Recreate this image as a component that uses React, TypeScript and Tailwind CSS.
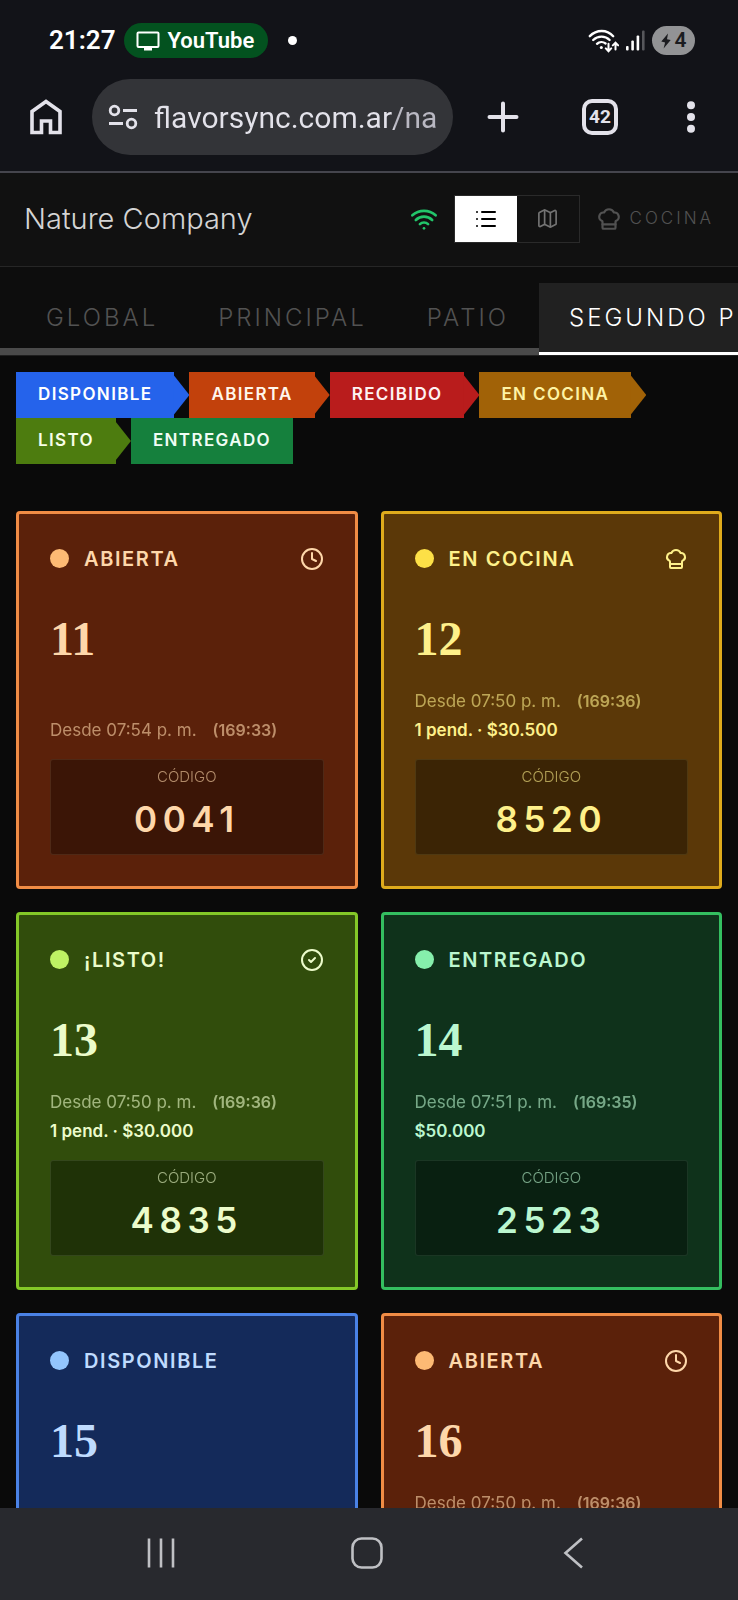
import { ChefHat, CircleCheck, Clock, List, Map, Wifi } from 'lucide-react'
import type { LucideIcon } from 'lucide-react'

type Status = 'disponible' | 'abierta' | 'cocina' | 'listo' | 'entregado'

interface TableInfo {
  number: string
  status: Status
  since?: string
  elapsed?: string
  summary?: string
  code?: string
}

const statusStyles: Record<Status, { label: string; card: string; dot: string; icon?: LucideIcon }> = {
  disponible: {
    label: 'DISPONIBLE',
    card: 'bg-[#142a5a] border-[#4a82e6] text-[#bfdbfe]',
    dot: 'bg-[#93c5fd]',
  },
  abierta: {
    label: 'ABIERTA',
    card: 'bg-[#5b210a] border-[#f08c45] text-[#fed7aa]',
    dot: 'bg-[#fdba74]',
    icon: Clock,
  },
  cocina: {
    label: 'EN COCINA',
    card: 'bg-[#5b3808] border-[#dfab1c] text-[#fef08a]',
    dot: 'bg-[#fde047]',
    icon: ChefHat,
  },
  listo: {
    label: '¡LISTO!',
    card: 'bg-[#314d0c] border-[#84c828] text-[#ecfccb]',
    dot: 'bg-[#bef264]',
    icon: CircleCheck,
  },
  entregado: {
    label: 'ENTREGADO',
    card: 'bg-[#0f321b] border-[#34be60] text-[#bbf7d0]',
    dot: 'bg-[#86efac]',
  },
}

const tables: TableInfo[] = [
  { number: '11', status: 'abierta', since: '07:54 p. m.', elapsed: '169:33', code: '0041' },
  { number: '12', status: 'cocina', since: '07:50 p. m.', elapsed: '169:36', summary: '1 pend. · $30.500', code: '8520' },
  { number: '13', status: 'listo', since: '07:50 p. m.', elapsed: '169:36', summary: '1 pend. · $30.000', code: '4835' },
  { number: '14', status: 'entregado', since: '07:51 p. m.', elapsed: '169:35', summary: '$50.000', code: '2523' },
  { number: '15', status: 'disponible' },
  { number: '16', status: 'abierta', since: '07:50 p. m.', elapsed: '169:36', summary: '$30.000', code: '1684' },
]

const legend = [
  { label: 'DISPONIBLE', box: 'bg-[#2563eb] text-white', tip: 'bg-[#2563eb]' },
  { label: 'ABIERTA', box: 'bg-[#c2410c] text-[#fff7ed]', tip: 'bg-[#c2410c]' },
  { label: 'RECIBIDO', box: 'bg-[#b91c1c] text-[#fef2f2]', tip: 'bg-[#b91c1c]' },
  { label: 'EN COCINA', box: 'bg-[#a16207] text-[#fef3a5]', tip: 'bg-[#a16207]' },
  { label: 'LISTO', box: 'bg-[#4d7c0f] text-[#f7fee7]', tip: 'bg-[#4d7c0f]' },
  { label: 'ENTREGADO', box: 'bg-[#15803d] text-[#f0fdf4]', tip: '' },
]

function StatusBar() {
  return (
    <div className="flex h-[79px] shrink-0 items-center pl-[49px] pr-[43px] pt-0.5 text-white">
      <span className="text-[26px] font-semibold">21:27</span>
      <span className="ml-2 flex h-[35px] items-center gap-2 rounded-full bg-[#03521f] px-3">
        <svg viewBox="0 0 24 20" className="h-5 w-6" fill="none" stroke="currentColor" strokeWidth="2">
          <rect x="1.5" y="1.5" width="21" height="14.5" rx="1" />
          <path d="M8 18h8" strokeWidth="3" />
        </svg>
        <span className="pr-0.5 text-[22px] font-semibold">YouTube</span>
      </span>
      <span className="ml-5 size-[9px] rounded-full bg-white" />
      <div className="ml-auto flex items-center gap-[7px]">
        <svg viewBox="0 0 31 24" className="h-6 w-[31px]" fill="none" stroke="currentColor" strokeWidth="2.4" strokeLinecap="round">
          <path d="M1.8 7.2C8.5.3 19 .3 25.2 7.2M5.2 11c4.7-4.5 12-4.5 16.4 0M9 14.8c2.4-2.2 6-2.2 8.6-.4" />
          <circle cx="13.3" cy="18.4" r="1.5" fill="currentColor" stroke="none" />
          <path d="M20.5 14.8v7M17.8 19.4l2.7 2.8 2.7-2.8M27.5 20.5V14M24.8 16.4l2.7-2.8 2.7 2.8" strokeWidth="2" />
        </svg>
        <svg viewBox="0 0 19 21" className="h-[21px] w-[19px]" fill="currentColor">
          <rect x="0" y="16" width="2.6" height="4.5" rx="1" />
          <rect x="5.3" y="10.5" width="2.6" height="10" rx="1" />
          <rect x="10.6" y="5.5" width="2.6" height="15" rx="1" />
          <rect x="16" y="0.5" width="2.6" height="20" rx="1" fill="#56575b" />
        </svg>
        <span className="flex h-[29px] w-[43px] items-center justify-center gap-1 rounded-full bg-[#929395] text-[#1b1c20]">
          <svg viewBox="0 0 10 16" className="h-4 w-[10px]" fill="currentColor">
            <path d="M7 .5.3 8.6l3.8.8L2.6 15.5 9.7 7 6 6.2z" />
          </svg>
          <span className="text-[21px] font-semibold leading-none">4</span>
        </span>
      </div>
    </div>
  )
}

function BrowserBar() {
  return (
    <div className="flex shrink-0 items-center border-b-2 border-[#45454d] pb-4 text-[#e3e2ea]">
      <button aria-label="Inicio" className="flex w-[92px] justify-center">
        <svg viewBox="0 0 32 36" className="h-9 w-8" fill="none" stroke="currentColor" strokeWidth="3.6">
          <path d="M2 33.5V12.5L16 2.5l14 10v21h-9.500V22h-9v11.500z" />
        </svg>
      </button>
      <div className="flex h-[76px] min-w-0 flex-1 items-center gap-4 rounded-full bg-[#333438] pl-4 pr-[15px]">
        <svg viewBox="0 0 30 26" className="h-[26px] w-[30px] shrink-0" fill="none" stroke="currentColor" strokeWidth="2.8">
          <circle cx="6.5" cy="6.5" r="4.3" />
          <path d="M15 6.500h14M1 19.500h14" />
          <circle cx="23.5" cy="19.5" r="4.3" />
        </svg>
        <input
          type="text"
          aria-label="Dirección"
          defaultValue="flavorsync.com.ar/na"
          className="w-full min-w-0 bg-linear-to-r from-[#e3e2ea] from-84% to-[#b9b8c2] to-85% bg-clip-text text-[30px] text-transparent outline-none"
        />
      </div>
      <button aria-label="Nueva pestaña" className="flex w-[100px] justify-center">
        <svg viewBox="0 0 32 32" className="size-8" stroke="currentColor" strokeWidth="4" strokeLinecap="round">
          <path d="M16 2.500v27M2.500 16h27" />
        </svg>
      </button>
      <button aria-label="Pestañas" className="flex w-[94px] justify-center">
        <span className="flex size-9 items-center justify-center rounded-[10px] border-4 border-current text-[19px] font-bold">
          42
        </span>
      </button>
      <button aria-label="Menú" className="flex w-[91px] justify-center pr-1">
        <svg viewBox="0 0 8 32" className="h-8 w-2" fill="currentColor">
          <circle cx="4" cy="4.3" r="4" />
          <circle cx="4" cy="16" r="4" />
          <circle cx="4" cy="27.7" r="4" />
        </svg>
      </button>
    </div>
  )
}

function Header() {
  return (
    <header className="flex h-[94px] shrink-0 items-center justify-between border-b border-[#262626] bg-[#111111] px-6 pb-0.5">
      <h1 className="text-[29px] font-light text-[#d4d4d4]">Nature Company</h1>
      <div className="flex items-center gap-4">
        <Wifi className="size-7 text-[#22c56a]" strokeWidth={2.25} />
        <div className="flex border border-[#2a2a2a]">
          <button aria-label="Lista" className="flex h-[46px] w-[62px] items-center justify-center bg-white text-black">
            <List className="size-6" strokeWidth={2} />
          </button>
          <button aria-label="Mapa" className="flex h-[46px] w-[62px] items-center justify-center text-[#737373]">
            <Map className="size-[23px]" strokeWidth={1.75} />
          </button>
        </div>
        <button className="flex items-center gap-2 text-[#525252]">
          <ChefHat className="size-[26px]" strokeWidth={2} />
          <span className="text-[17px] font-light tracking-[3px]">COCINA</span>
        </button>
      </div>
    </header>
  )
}

function ZoneTabs() {
  return (
    <nav className="flex shrink-0 overflow-hidden border-b border-[#1f1f1f] bg-[#0d0d0d] pt-4 text-[24px] font-light tracking-[3px]">
      <div className="flex shrink-0 border-b-[7px] border-[#4a4a4a] pl-4 text-[#525252]">
        <button className="h-[65px] px-[30px] pt-1">GLOBAL</button>
        <button className="h-[65px] px-[30px] pt-1">PRINCIPAL</button>
        <button className="h-[65px] px-[30px] pt-1">PATIO</button>
      </div>
      <button className="h-[72px] shrink-0 border-b-[3px] border-white bg-[#212121] px-[30px] text-white">
        SEGUNDO PISO
      </button>
    </nav>
  )
}

function Legend() {
  return (
    <ul className="flex flex-wrap px-4 pt-4 text-[17px] font-semibold tracking-[0.08em]">
      {legend.map((item) => (
        <li key={item.label} className="flex h-[46px]">
          <span className={`flex items-center px-[22px] ${item.box}`}>{item.label}</span>
          {item.tip && (
            <span className={`-ml-px w-4 [clip-path:polygon(0_6%,100%_50%,0_94%)] ${item.tip}`} />
          )}
        </li>
      ))}
    </ul>
  )
}

function TableCard({ table }: { table: TableInfo }) {
  const style = statusStyles[table.status]
  const Icon = style.icon

  return (
    <article className={`flex min-h-[378px] flex-col rounded-[4px] border-[3px] p-[31px] ${style.card}`}>
      <div className="flex h-[27px] items-center">
        <span className={`size-[19px] rounded-full ${style.dot}`} />
        <span className="ml-[15px] text-[20px] font-semibold tracking-[0.08em]">{style.label}</span>
        {Icon && <Icon className="ml-auto size-6" strokeWidth={2} />}
      </div>
      <h2 className="mt-[43px] font-['Liberation_Serif',serif] text-[48px] font-bold leading-none">{table.number}</h2>
      <div className="mt-auto text-[17px] leading-[29px]">
        {table.since && (
          <p className="flex gap-4 opacity-60">
            <span>Desde {table.since}</span>
            <span className="text-[16px] font-semibold">({table.elapsed})</span>
          </p>
        )}
        {table.summary && <p className="font-semibold">{table.summary}</p>}
      </div>
      {table.code && (
        <div className="mt-[14px] flex h-24 flex-col items-center rounded-[3px] border border-current/10 bg-black/35 pt-[5px]">
          <span className="text-[15px] font-light leading-6 opacity-60">CÓDIGO</span>
          <span className="mt-1 text-[35px] font-semibold leading-[52px] tracking-[0.16em]">{table.code}</span>
        </div>
      )}
    </article>
  )
}

function SystemNav() {
  return (
    <div className="flex h-[92px] shrink-0 items-center justify-center bg-[#28292e] pb-0.5 pr-1 text-[#bfc0c4]">
      <button aria-label="Recientes" className="flex w-[206px] justify-center">
        <svg viewBox="0 0 28 30" className="h-[30px] w-7" stroke="currentColor" strokeWidth="2.6">
          <path d="M2 .5v29M14 .5v29M26 .5v29" />
        </svg>
      </button>
      <button aria-label="Inicio del sistema" className="flex w-[206px] justify-center">
        <svg viewBox="0 0 32 32" className="size-8" fill="none" stroke="currentColor" strokeWidth="2.6">
          <rect x="1.5" y="1.5" width="29" height="29" rx="9" />
        </svg>
      </button>
      <button aria-label="Atrás" className="flex w-[206px] justify-center">
        <svg viewBox="0 0 20 32" className="h-8 w-5" fill="none" stroke="currentColor" strokeWidth="2.6">
          <path d="M19 1.500 2.500 16 19 30.500" />
        </svg>
      </button>
    </div>
  )
}

export default function App() {
  return (
    <div className="flex h-screen flex-col overflow-hidden bg-[#0a0a0a] font-['Inter',sans-serif]">
      <div className="shrink-0 bg-[#121318] font-['Roboto',sans-serif]">
        <StatusBar />
        <BrowserBar />
      </div>
      <Header />
      <ZoneTabs />
      <main className="min-h-0 flex-1 overflow-hidden">
        <Legend />
        <section className="mt-[47px] grid grid-cols-2 gap-[23px] px-4">
          {tables.map((table) => (
            <TableCard key={table.number} table={table} />
          ))}
        </section>
      </main>
      <SystemNav />
    </div>
  )
}
